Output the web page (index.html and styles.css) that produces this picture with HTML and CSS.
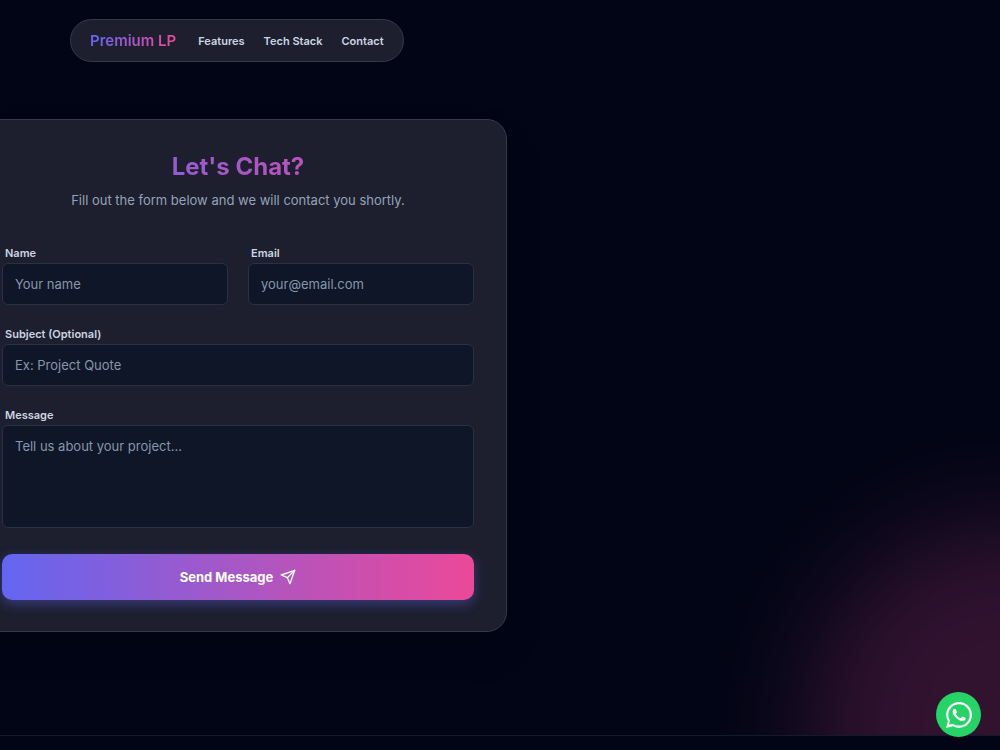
FILE: index.html
```html
<!DOCTYPE html>
<html lang="en">

<head>
  <meta charset="UTF-8" />
  <meta name="viewport" content="width=device-width, initial-scale=1.0" />
  <title>Premium LP</title>
  <link rel="stylesheet" href="styles.css">
</head>

<body>
  <main class="page">
    <div class="glow"></div>

    <header class="header">
      <nav class="navbar">
        <a class="logo" href="#">Premium LP</a>
        <a class="nav-link" href="#features">Features</a>
        <a class="nav-link" href="#tech">Tech Stack</a>
        <a class="nav-link" href="#contact">Contact</a>
      </nav>
    </header>

    <section class="contact" id="contact">
      <h2 class="title">Let's Chat?</h2>
      <p class="subtitle">Fill out the form below and we will contact you shortly.</p>

      <form class="form">
        <div class="row">
          <div class="field">
            <label for="name">Name</label>
            <input type="text" id="name" placeholder="Your name" />
          </div>
          <div class="field">
            <label for="email">Email</label>
            <input type="email" id="email" placeholder="your@email.com" />
          </div>
        </div>
        <div class="field">
          <label for="subject">Subject (Optional)</label>
          <input type="text" id="subject" placeholder="Ex: Project Quote" />
        </div>
        <div class="field">
          <label for="message">Message</label>
          <textarea id="message" placeholder="Tell us about your project..."></textarea>
        </div>
        <button class="send" type="submit">
          Send Message
          <svg width="16" height="16" viewBox="0 0 24 24" fill="none" stroke="currentColor" stroke-width="2" stroke-linecap="round" stroke-linejoin="round">
            <path d="M22 2 2 9l9 4 4 9z" />
            <path d="M22 2 11 13" />
          </svg>
        </button>
      </form>
    </section>
  </main>

  <footer class="footer"></footer>

  <a class="whatsapp" href="#whatsapp" aria-label="WhatsApp">
    <svg width="26" height="26" viewBox="0 0 24 24" fill="currentColor">
      <path d="M.057 24l1.687-6.163a11.867 11.867 0 0 1-1.587-5.946C.16 5.335 5.495 0 12.05 0a11.817 11.817 0 0 1 8.413 3.488 11.824 11.824 0 0 1 3.48 8.414c-.003 6.557-5.338 11.892-11.893 11.892a11.9 11.9 0 0 1-5.688-1.448L.057 24zm6.597-3.807c1.676.995 3.276 1.591 5.392 1.592 5.448 0 9.886-4.434 9.889-9.885.002-5.462-4.415-9.89-9.881-9.892-5.452 0-9.887 4.434-9.889 9.884a9.82 9.82 0 0 0 1.51 5.26l-.999 3.648 3.978-.607z" />
      <path d="M17.5 14.4c-.3-.15-1.76-.87-2.03-.97-.27-.1-.47-.15-.67.15-.2.3-.77.97-.94 1.16-.17.2-.35.22-.64.08-.3-.15-1.26-.47-2.39-1.48-.88-.79-1.48-1.76-1.65-2.06-.17-.3-.02-.46.13-.6.13-.14.3-.35.45-.53.15-.17.2-.3.3-.5.1-.2.05-.37-.03-.52-.07-.15-.67-1.61-.91-2.21-.25-.58-.49-.5-.67-.51l-.57-.01c-.2 0-.52.07-.79.37-.27.3-1.04 1.02-1.04 2.48s1.07 2.88 1.21 3.07c.15.2 2.1 3.2 5.08 4.49.71.31 1.26.49 1.7.63.71.22 1.36.19 1.87.12.57-.09 1.76-.72 2-1.42.25-.69.25-1.29.18-1.41-.08-.12-.27-.2-.57-.35z" />
    </svg>
  </a>
</body>

</html>
```
FILE: styles.css
```css
* {
  padding: 0;
  margin: 0;
  box-sizing: border-box;
}

body {
  background: #020515;
  color: #f8fafc;
  font-family: Inter, "Liberation Sans", sans-serif;
  overflow-x: hidden;
}

a {
  text-decoration: none;
}

.page {
  position: relative;
  overflow: hidden;
  padding: 19px 0 103px;
}

.glow {
  position: absolute;
  right: -208px;
  bottom: -188px;
  width: 400px;
  height: 400px;
  border-radius: 50%;
  background: #ec4899;
  opacity: 0.2;
  filter: blur(52px);
}

.header {
  display: flex;
  padding-left: 70px;
}

.navbar {
  display: flex;
  align-items: center;
  gap: 19px;
  height: 43px;
  padding: 0 19px;
  background: #1d1f2f;
  border: 1px solid #373946;
  border-radius: 22px;
}

.logo {
  margin-right: 3px;
  font-size: 15px;
  font-weight: 600;
  background: linear-gradient(90deg, #6366f1, #ec4899);
  -webkit-background-clip: text;
  background-clip: text;
  color: transparent;
}

.nav-link {
  font-size: 11px;
  font-weight: 600;
  color: #cbd5e1;
}

.contact {
  position: relative;
  max-width: 538px;
  margin-top: 57px;
  margin-left: -31px;
  padding: 32px 32px 31px;
  background: #1d1f2f;
  border: 1px solid #373946;
  border-radius: 20px;
  box-shadow: 0 20px 40px rgba(0, 0, 0, 0.1);
}

.title {
  font-size: 24px;
  line-height: 30px;
  font-weight: 700;
  text-align: center;
  background: linear-gradient(90deg, #6366f1, #ec4899);
  -webkit-background-clip: text;
  background-clip: text;
  color: transparent;
}

.subtitle {
  margin-top: 8px;
  font-size: 13px;
  line-height: 20px;
  text-align: center;
  color: #94a3b8;
}

.form {
  display: flex;
  flex-direction: column;
  gap: 20px;
  margin-top: 34px;
}

.row {
  display: grid;
  grid-template-columns: 1fr 1fr;
  gap: 20px;
}

.field {
  display: flex;
  flex-direction: column;
}

.field label {
  padding-left: 3px;
  font-size: 11px;
  line-height: 19px;
  font-weight: 600;
  color: #cbd5e1;
}

.field input,
.field textarea {
  width: 100%;
  height: 42px;
  padding: 0 12px 1px;
  background: #0e1628;
  border: 1px solid #273244;
  border-radius: 6px;
  outline: none;
  color: #f8fafc;
  font-family: inherit;
  font-size: 13px;
}

.field textarea {
  height: 103px;
  padding-top: 12px;
  resize: none;
}

.field input::placeholder,
.field textarea::placeholder {
  color: #8796aa;
}

.send {
  display: flex;
  align-items: center;
  justify-content: center;
  gap: 7px;
  height: 46px;
  margin-top: 6px;
  border: none;
  border-radius: 10px;
  background: linear-gradient(90deg, #6366f1, #ec4899);
  box-shadow: 0 4px 12px rgba(99, 102, 241, 0.4);
  color: #fff;
  font-family: inherit;
  font-size: 13px;
  font-weight: 700;
  cursor: pointer;
}

.footer {
  height: 15px;
  border-top: 1px solid #131a2a;
}

.whatsapp {
  position: fixed;
  right: 19px;
  bottom: 13px;
  display: flex;
  align-items: center;
  justify-content: center;
  width: 45px;
  height: 45px;
  border-radius: 50%;
  background: #25d366;
  color: #fff;
}
```
